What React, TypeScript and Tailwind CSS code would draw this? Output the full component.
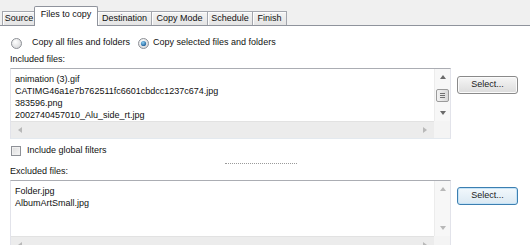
import React from 'react';

const font = { fontFamily: '"Liberation Sans", Arial, sans-serif' };

const tabs = [
	{ label: 'Source', w: 'w-[34px]' },
	{ label: 'Files to copy', w: 'w-[64px]', active: true },
	{ label: 'Destination', w: 'w-[55px]' },
	{ label: 'Copy Mode', w: 'w-[57px]' },
	{ label: 'Schedule', w: 'w-[46px]' },
	{ label: 'Finish', w: 'w-[35px]' },
];

const Arrow = ({ dir, light }: { dir: 'up' | 'down' | 'left' | 'right'; light?: boolean }) => {
	const pts = {
		up: '1,5 4,1 7,5',
		down: '1,1 4,5 7,1',
		left: '5,1 1,4 5,7',
		right: '1,1 5,4 1,7',
	}[dir];
	const size = dir === 'up' || dir === 'down' ? { w: 8, h: 6 } : { w: 6, h: 8 };
	return (
		<svg width={size.w} height={size.h} viewBox={`0 0 ${size.w} ${size.h}`}>
			<polygon points={pts} fill={light ? '#b8b8b8' : '#6a6a6a'} />
		</svg>
	);
};

const Radio = ({ checked }: { checked?: boolean }) => (
	<svg width="11" height="11" viewBox="0 0 11 11">
		<defs>
			<radialGradient id={checked ? 'rg1' : 'rg0'} cx="0.4" cy="0.35" r="0.7">
				<stop offset="0" stopColor="#ffffff" />
				<stop offset="1" stopColor="#d5d6d8" />
			</radialGradient>
			<radialGradient id="dot" cx="0.4" cy="0.35" r="0.7">
				<stop offset="0" stopColor="#8bd0f5" />
				<stop offset="1" stopColor="#1b5a94" />
			</radialGradient>
		</defs>
		<circle cx="5.5" cy="5.5" r="5" fill={`url(#${checked ? 'rg1' : 'rg0'})`} stroke="#8e9197" strokeWidth="1" />
		{checked && <circle cx="5.5" cy="5.5" r="2.6" fill="url(#dot)" />}
	</svg>
);

const SelectButton = ({ focused }: { focused?: boolean }) => (
	<button
		className={`w-[61px] h-[18px] rounded-[3px] border text-[9px] text-[#1a1a1a] leading-none ${
			focused
				? 'border-[#3c7fb1] bg-gradient-to-b from-[#f2f8fc] to-[#dbe9f3] shadow-[inset_0_0_0_1px_#c5e3f7]'
				: 'border-[#8a8a8a] bg-gradient-to-b from-[#f6f6f6] to-[#dcdcdc] shadow-[inset_0_0_0_1px_#fbfbfb]'
		}`}
	>
		Select...
	</button>
);

const ListBox = ({
	items,
	height,
	thumb,
}: {
	items: string[];
	height: string;
	thumb?: boolean;
}) => (
	<div
		className={`w-[441px] ${height} bg-white border border-t-[#abadb3] border-x-[#e2e3ea] border-b-[#e3e9ef] flex flex-col overflow-hidden`}
	>
		<div className="flex flex-1 min-h-0">
			<div className="flex-1 pl-[4px] pt-[4px] text-[9px] leading-[12px] text-[#111]">
				{items.map((it) => (
					<div key={it}>{it}</div>
				))}
			</div>
			{/* vertical scrollbar */}
			<div className="w-[16px] bg-[#f7f7f7] border-l border-[#ececec] flex flex-col items-center justify-between py-[5px]">
				<Arrow dir="up" light={!thumb} />
				{thumb && (
					<div className="w-[13px] h-[13px] rounded-[2px] border border-[#9a9a9a] bg-gradient-to-r from-[#f2f2f2] to-[#d9d9d9] flex flex-col items-center justify-center gap-[1px]">
						<div className="w-[5px] h-px bg-[#707070]" />
						<div className="w-[5px] h-px bg-[#707070]" />
						<div className="w-[5px] h-px bg-[#707070]" />
					</div>
				)}
				<Arrow dir="down" light={!thumb} />
			</div>
		</div>
		{/* horizontal scrollbar */}
		<div className="flex h-[17px] shrink-0">
			<div className="flex-1 bg-[#ececec] border-t border-[#e2e2e2] flex items-center justify-between px-[6px]">
				<Arrow dir="left" light />
				<Arrow dir="right" light />
			</div>
			<div className="w-[16px] bg-[#f4f4f4]" />
		</div>
	</div>
);

export default function App() {
	return (
		<div className="w-[530px] h-[245px] overflow-hidden bg-white text-[#111]" style={font}>
			{/* tab strip */}
			<div className="h-[26px] bg-[#f0f0f0] border-b border-[#8f939c] flex items-end pl-[2px]">
				{tabs.map((t) =>
					t.active ? (
						<div
							key={t.label}
							className={`${t.w} h-[20px] -mb-px -mx-px z-10 bg-white border border-b-0 border-[#8f939c] rounded-t-[2px] flex items-center justify-center text-[9px] pb-[3px]`}
						>
							{t.label}
						</div>
					) : (
						<div
							key={t.label}
							className={`${t.w} h-[14px] -mr-px bg-gradient-to-b from-[#f4f4f4] to-[#e4e4e4] border border-b-0 border-[#a3a6ad] shadow-[inset_1px_1px_0_#fdfdfd] flex items-center justify-center text-[9px]`}
						>
							{t.label}
						</div>
					)
				)}
			</div>

			<div className="pl-[10px] pt-[11px]">
				{/* copy mode radios */}
				<div className="h-[12px] flex items-center text-[9px]">
					<div className="ml-[1px] flex items-center gap-[10px]">
						<Radio />
						<span>Copy all files and folders</span>
					</div>
					<div className="ml-[8px] flex items-center gap-[4px]">
						<Radio checked />
						<span>Copy selected files and folders</span>
					</div>
				</div>

				<div className="mt-[5px] h-[12px] flex items-center text-[9px]">Included files:</div>
				<div className="mt-[2px] flex items-start gap-[6px]">
					<ListBox
						height="h-[71px]"
						thumb
						items={[
							'animation (3).gif',
							'CATIMG46a1e7b762511fc6601cbdcc1237c674.jpg',
							'383596.png',
							'2002740457010_Alu_side_rt.jpg',
						]}
					/>
					<div className="pt-[2px]">
						<SelectButton />
					</div>
				</div>

				{/* global filters */}
				<div className="mt-[5px] h-[13px] flex items-center gap-[6px] text-[9px]">
					<div className="ml-[1px] w-[10px] h-[10px] border border-[#8e9197] bg-gradient-to-br from-[#dcdcdc] to-[#f6f6f6] shadow-[inset_0_0_0_1px_#f0f0f0]" />
					<span>Include global filters</span>
				</div>

				{/* splitter grip */}
				<div className="mt-[6px] h-px flex pl-[215px]">
					<div className="w-[72px] border-t border-dotted border-[#9a9a9a]" />
				</div>

				<div className="mt-[2px] h-[12px] flex items-center text-[9px]">Excluded files:</div>
				<div className="mt-[2px] flex items-start gap-[6px]">
					<ListBox height="h-[74px]" items={['Folder.jpg', 'AlbumArtSmall.jpg']} />
					<div className="pt-[1px]">
						<SelectButton focused />
					</div>
				</div>
			</div>
		</div>
	);
}
